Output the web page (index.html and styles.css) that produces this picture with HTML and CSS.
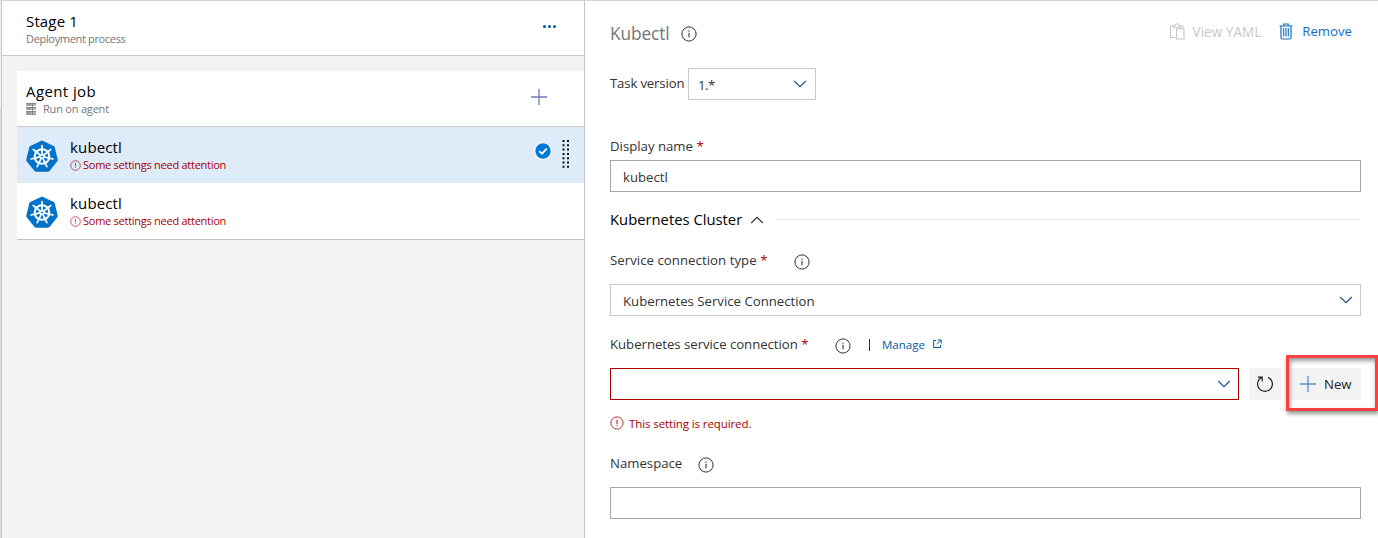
FILE: index.html
```html
<!DOCTYPE html>
<html lang="en">
<head>
<meta charset="utf-8">
<title>Stage 1 - Kubectl</title>
<link rel="stylesheet" href="styles.css">
</head>
<body>
<svg class="defs" width="0" height="0" aria-hidden="true">
  <symbol id="info" viewBox="0 0 16 16"><circle cx="8" cy="8" r="7.1" fill="none" stroke="currentColor"/><path d="M8 6.8V11.2M8 4.6V5.7" fill="none" stroke="currentColor" stroke-width="1.1"/></symbol>
  <symbol id="alert" viewBox="0 0 14 14"><circle cx="7" cy="7" r="6.1" fill="none" stroke="currentColor" stroke-width=".8"/><path d="M7 3.6V8.2M7 9.2V10.3" fill="none" stroke="currentColor" stroke-width=".9"/></symbol>
  <symbol id="chevron" viewBox="0 0 14 8"><path d="M1.2 1L7 6.7L12.8 1" fill="none" stroke="currentColor" stroke-width="1.1"/></symbol>
  <symbol id="plus" viewBox="0 0 16 16"><path d="M8 0V16M0 8H16" fill="none" stroke="currentColor" stroke-width="1.3"/></symbol>
  <symbol id="kube" viewBox="0 0 32 32">
    <path d="M16 .4L27.7 6Q28.5 6.5 28.8 7.4L31.7 19.4Q31.9 20.4 31.3 21.2L23.5 31.1Q22.8 31.8 21.8 31.8H10.2Q9.2 31.8 8.5 31.1L.7 21.2Q.1 20.4 .3 19.4L3.2 7.4Q3.5 6.5 4.3 6Z" fill="#0072c9"/>
    <g stroke="#fff" fill="none" stroke-linecap="round">
      <circle cx="16" cy="16.5" r="7.3" stroke-width="2.1"/>
      <g stroke-width="1.7">
        <path d="M16 14.8V5.6"/>
        <path d="M16 14.5V5.3" transform="rotate(51.43 16 16.5)"/>
        <path d="M16 14.5V5.3" transform="rotate(102.86 16 16.5)"/>
        <path d="M16 14.5V5.3" transform="rotate(154.29 16 16.5)"/>
        <path d="M16 14.5V5.3" transform="rotate(205.71 16 16.5)"/>
        <path d="M16 14.5V5.3" transform="rotate(257.14 16 16.5)"/>
        <path d="M16 14.5V5.3" transform="rotate(308.57 16 16.5)"/>
      </g>
      <circle cx="16" cy="16.5" r="1.8" stroke-width="1.4"/>
    </g>
  </symbol>
</svg>
<div class="app">
  <div class="gutter"></div>
  <section class="pipeline">
    <header class="stage">
      <div class="stage-text">
        <div class="heading">Stage 1</div>
        <div class="sub">Deployment process</div>
      </div>
      <svg class="more" width="13" height="3" viewBox="0 0 13 3"><g fill="#005a9e"><circle cx="1.5" cy="1.5" r="1.5"/><circle cx="6.5" cy="1.5" r="1.5"/><circle cx="11.5" cy="1.5" r="1.5"/></g></svg>
    </header>
    <div class="job">
      <div class="job-head">
        <div class="job-text">
          <div class="heading agent">Agent job</div>
          <div class="sub run"><svg width="10" height="12" viewBox="0 0 10 12"><path d="M0 0H10V3H0ZM0 4H10V7H0ZM0 8H10V11H0Z" fill="#b4b4b4"/><path d="M0 .5H10M0 4.5H10M0 8.5H10M1 2H5M1 6H5M1 10H5M0 11.5H10M6.5 0V12" fill="none" stroke="#7c7c7c" stroke-width=".8"/></svg><span>Run on agent</span></div>
        </div>
        <svg class="add" width="16" height="16"><use href="#plus"/></svg>
      </div>
      <div class="task selected">
        <svg class="logo" width="32" height="32"><use href="#kube"/></svg>
        <div class="task-text">
          <div class="heading name">kubectl</div>
          <div class="warn"><svg width="11" height="11"><use href="#alert"/></svg><span>Some settings need attention</span></div>
        </div>
        <svg class="check" width="18" height="18" viewBox="0 0 18 18"><circle cx="9" cy="9" r="8.7" fill="#fff"/><circle cx="9" cy="9" r="7.7" fill="#0078d7"/><path d="M5.2 9.1L8 11.7L12.8 6.7" fill="none" stroke="#fff" stroke-width="1.9"/></svg>
        <svg class="grip" width="8" height="28" viewBox="0 0 8 28"><path d="M1.5 0V28M6 0V28" fill="none" stroke="#111" stroke-width="2" stroke-dasharray="2 2.3"/></svg>
      </div>
      <div class="task">
        <svg class="logo" width="32" height="32"><use href="#kube"/></svg>
        <div class="task-text">
          <div class="heading name">kubectl</div>
          <div class="warn"><svg width="11" height="11"><use href="#alert"/></svg><span>Some settings need attention</span></div>
        </div>
      </div>
    </div>
  </section>
  <main class="detail">
    <div class="title-row">
      <span class="title">Kubectl</span>
      <svg class="info" width="16" height="16"><use href="#info"/></svg>
      <div class="actions">
        <span class="action disabled"><svg width="16" height="17" viewBox="0 0 16 17"><path d="M6.5 14.5H1.5V3H4.5M11.5 3H14V5M4.5 4.5V2.5H6.3Q6.5 .7 8 .7T9.7 2.5H11.5V4.5ZM7.5 5.7H15V16H7.5Z" fill="none" stroke="currentColor" stroke-width="1.1"/></svg><span class="yaml">View YAML</span></span>
        <span class="action"><svg width="14" height="17" viewBox="0 0 14 17"><path d="M.5 3H13.5M4.8 3V1H9.2V3M2 3V14.5Q2 16 3.5 16H10.5Q12 16 12 14.5V3" fill="none" stroke="currentColor" stroke-width="1.2"/><path d="M4.7 5V13.5M7 5V13.5M9.3 5V13.5" stroke="currentColor" stroke-width="1.1"/></svg><span class="remove">Remove</span></span>
      </div>
    </div>
    <div class="version-row">
      <span class="label version-label">Task version</span>
      <div class="box version"><span>1.*</span><svg class="chev" width="14" height="8"><use href="#chevron"/></svg></div>
    </div>
    <div class="field-label display"><span class="label l-display">Display name <i>*</i></span></div>
    <div class="box input"><span>kubectl</span></div>
    <div class="section"><span class="section-name">Kubernetes Cluster</span><svg class="up" width="14" height="8"><use href="#chevron"/></svg><span class="rule"></span></div>
    <div class="field-label type"><span class="label l-type">Service connection type <i>*</i></span><svg class="info" width="16" height="16"><use href="#info"/></svg></div>
    <div class="box"><span>Kubernetes Service Connection</span><svg class="chev" width="14" height="8"><use href="#chevron"/></svg></div>
    <div class="field-label conn"><span class="label l-conn">Kubernetes service connection <i>*</i></span><svg class="info" width="16" height="16"><use href="#info"/></svg><span class="bar"></span><a class="manage">Manage</a><svg class="ext" width="9" height="10" viewBox="0 0 9 10"><path d="M3 1.5H.6V8.5H7.5V6M4.5 1H8.2V4.5M8 1.2L4 5.2" fill="none" stroke="#005a9e"/></svg></div>
    <div class="conn-row">
      <div class="box invalid"><svg class="chev" width="14" height="8"><use href="#chevron"/></svg></div>
      <div class="btn refresh"><svg width="18" height="18" viewBox="0 0 18 18"><path d="M5.8 2.4A7.4 7.4 0 1 0 12.2 2.4M1.8 2.2H6.2V6.4" fill="none" stroke="#222" stroke-width="1.2"/></svg></div>
      <div class="btn new"><svg width="16" height="16"><use href="#plus"/></svg><span>New</span><div class="callout"></div></div>
    </div>
    <div class="error"><svg width="14" height="14"><use href="#alert"/></svg><span>This setting is required.</span></div>
    <div class="field-label ns"><span class="label l-ns">Namespace</span><svg class="info" width="16" height="16"><use href="#info"/></svg></div>
    <div class="box input"></div>
  </main>
</div>
</body>
</html>
```
FILE: styles.css
```css
* { box-sizing: border-box; }
body { margin: 0; background: #fff; font-family: "Open Sans", "Noto Sans", sans-serif; font-size: 13.2px; color: #333; overflow: hidden; white-space: nowrap; }
svg { display: block; flex: none; }
.defs { position: absolute; }
.app { display: flex; width: 1378px; height: 538px; border-top: 1px solid #d4d4d4; }
.gutter { width: 2px; border-right: 1px solid #c8c8c8; background: linear-gradient(#f0f0f0 108px, #dcdcdc 108px); }
.pipeline { width: 583px; background: #f3f3f3; border-right: 1px solid #c4c4c4; }
.stage { display: flex; align-items: flex-start; justify-content: space-between; height: 55px; padding: 10px 28px 0 24px; background: #fff; border-bottom: 1px solid #c8c8c8; }
.heading { font-size: 15px; line-height: 21px; letter-spacing: .15px; color: #000; }
.agent { letter-spacing: .4px; }
.sub { font-size: 11px; line-height: 14px; letter-spacing: -.33px; color: #767676; }
.more { margin-top: 14px; }
.job { margin: 15px 0 0 15px; background: #fff; border-bottom: 1px solid #c4c4c4; }
.job-head { display: flex; justify-content: space-between; height: 56px; padding: 10px 37px 0 9px; border-bottom: 1px solid #c8c8c8; }
.run { display: flex; align-items: center; gap: 7px; letter-spacing: -.2px; }
.add { margin-top: 8px; color: #6f78bd; }
.task { display: flex; height: 56px; padding-left: 9px; }
.selected { background: #deebf9; }
.logo { margin-top: 13px; }
.task-text { width: 452px; padding: 10px 0 0 12px; }
.warn { display: flex; align-items: center; gap: 2px; font-size: 11px; line-height: 14px; letter-spacing: -.26px; color: #a80000; }
.check { margin: 15px 0 0 24px; }
.grip { margin: 13px 0 0 10px; }
.detail { width: 768px; margin-left: 25px; padding-right: 17px; }
.title-row { display: flex; align-items: center; height: 66px; }
.title { width: 71px; padding-bottom: 1px; font-size: 17.3px; letter-spacing: -.1px; color: #767676; }
.info { color: #333; }
.actions { display: flex; gap: 18px; margin-left: auto; padding: 0 9px 6px 0; }
.action { display: flex; align-items: center; gap: 9px; color: #106ebe; }
.yaml { font-size: 13.6px; }
.disabled { color: #c8c8c8; gap: 8px; }
.version-row { display: flex; height: 32px; margin-top: 1px; }
.version-label { width: 78px; line-height: 30px; letter-spacing: -.16px; }
.box { display: flex; align-items: center; height: 32px; padding: 2px 7px 0 12px; border: 1px solid #c8c8c8; background: #fff; }
.box .chev { margin: -2px 0 0 auto; color: #1b4f80; }
.version { width: 128px; padding-left: 9px; padding-right: 8px; letter-spacing: -.5px; }
.input { border-color: #a6a6a6; }
.label i { font-style: normal; color: #a80000; }
.field-label { display: flex; align-items: center; height: 28px; margin-bottom: 9px; }
.display { margin: 32px 0 0; }
.section { display: flex; align-items: center; height: 55px; }
.section-name { width: 140px; padding-bottom: 2px; font-size: 14.8px; color: #000; }
.up { transform: rotate(180deg); color: #333; }
.rule { flex: 1; height: 1px; margin-left: 11px; background: #eaeaea; }
.field-label .info { margin-top: 3px; }
.type, .conn { height: 27px; margin-bottom: 10px; }
.l-type { width: 184px; letter-spacing: .05px; }
.conn { margin-top: 15px; }
.l-conn { width: 225px; letter-spacing: -.03px; }
.l-type, .l-conn { padding-bottom: 1px; }
.bar { width: 1px; height: 12px; margin: 1px 12px 0 18px; background: #333; }
.manage { width: 51px; font-size: 11.5px; color: #005a9e; }
.ext { margin-bottom: 1px; }
.conn-row { display: flex; height: 32px; }
.invalid { width: 629px; border-color: #a80000; }
.btn { display: flex; align-items: center; height: 32px; background: #f3f3f3; color: #222; }
.refresh { width: 32px; margin: 0 10px; padding-left: 7px; }
.new { position: relative; width: 70px; padding-left: 9px; gap: 8px; }
.new svg { color: #5c8fcb; }
.callout { position: absolute; left: -5px; top: -13px; width: 92px; height: 56px; border: 3px solid #fb4141; box-shadow: 1px 3px 4px rgba(0,0,0,.4), inset 1px 3px 4px rgba(0,0,0,.4); }
.error { display: flex; align-items: center; gap: 5px; height: 48px; padding-bottom: 2px; font-size: 11.5px; letter-spacing: -.1px; color: #a80000; }
.ns { height: 30px; }
.l-ns { width: 88px; }
```
